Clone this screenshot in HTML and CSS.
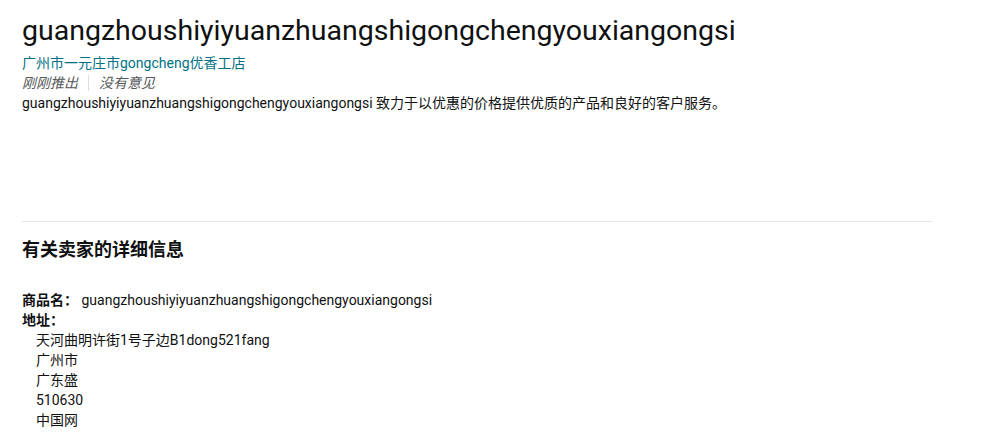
FILE: index.html
```html
<!DOCTYPE html>
<html lang="zh-CN">
<head>
    <meta charset="UTF-8">
    <title>guangzhoushiyiyuanzhuangshigongchengyouxiangongsi</title>
    <link rel="stylesheet" href="styles.css">
</head>
<body>

    <div class="pagina">
        <div class="vendedor">
            <h1>guangzhoushiyiyuanzhuangshigongchengyouxiangongsi</h1>
            <a class="loja" href="#">广州市一元庄市gongcheng优香工店</a>
            <div class="avaliacao">
                <span>刚刚推出</span>
                <span class="divisor"></span>
                <span>没有意见</span>
            </div>
            <p class="descricao">guangzhoushiyiyuanzhuangshigongchengyouxiangongsi 致力于以优惠的价格提供优质的产品和良好的客户服务。</p>
        </div>

        <hr class="linha">

        <div class="detalhes">
            <h3>有关卖家的详细信息</h3>
            <div class="campo">
                <span class="rotulo">商品名：</span>
                <span>guangzhoushiyiyuanzhuangshigongchengyouxiangongsi</span>
            </div>
            <div class="campo">
                <span class="rotulo">地址：</span>
            </div>
            <ul class="endereco">
                <li>天河曲明许街1号子边B1dong521fang</li>
                <li>广州市</li>
                <li>广东盛</li>
                <li>510630</li>
                <li>中国网</li>
            </ul>
        </div>
    </div>

</body>
</html>
```

FILE: styles.css
```css
* {
    margin: 0;
    padding: 0;
    box-sizing: border-box;
}

body {
    font-family: 'Roboto', 'Noto Sans CJK SC', sans-serif;
    font-size: 14px;
    line-height: 20px;
    color: #0f1111;
    background: #fff;
}

.pagina {
    width: 910px;
    margin-left: 22px;
}

.vendedor {
    padding-top: 13px;
}

.vendedor h1 {
    font-size: 28.5px;
    line-height: 36px;
    font-weight: 400;
    margin-bottom: 4px;
}

.loja {
    display: block;
    color: #007185;
    text-decoration: none;
}

.avaliacao {
    display: flex;
    align-items: center;
    color: #565959;
    font-style: italic;
}

.divisor {
    width: 1px;
    height: 16px;
    background: #ddd;
    margin: 0 10px;
}

.linha {
    border: none;
    border-top: 1px solid #e7e7e7;
    margin-top: 108px;
}

.detalhes h3 {
    font-size: 18px;
    line-height: 24px;
    font-weight: 700;
    margin-top: 16px;
    margin-bottom: 28px;
}

.rotulo {
    font-weight: 700;
}

.endereco {
    list-style: none;
    padding-left: 14px;
}
```
